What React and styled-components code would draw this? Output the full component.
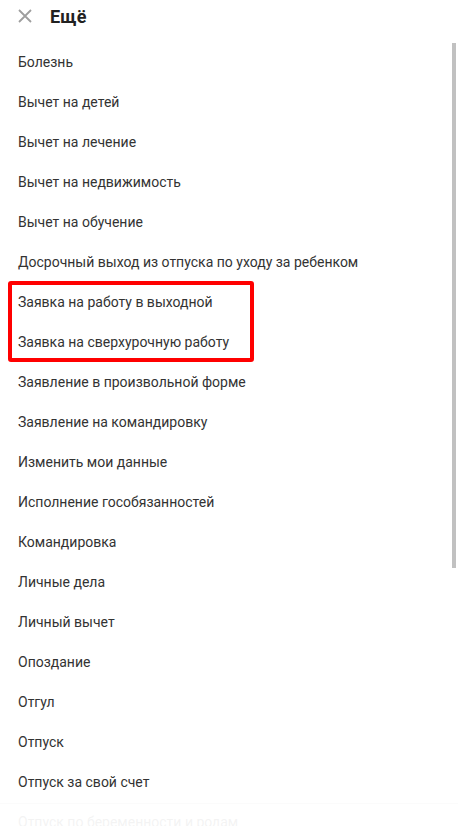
import React from "react";
import styled, { createGlobalStyle } from "styled-components";

const GlobalStyle = createGlobalStyle`
  html, body {
    margin: 0;
    padding: 0;
    background: #fff;
    font-family: Roboto, "Noto Sans", Arial, sans-serif;
  }
  * {
    box-sizing: border-box;
  }
`;

const topItems = [
  "Болезнь",
  "Вычет на детей",
  "Вычет на лечение",
  "Вычет на недвижимость",
  "Вычет на обучение",
  "Досрочный выход из отпуска по уходу за ребенком",
];

const marked = ["Заявка на работу в выходной", "Заявка на сверхурочную работу"];

const restItems = [
  "Заявление в произвольной форме",
  "Заявление на командировку",
  "Изменить мои данные",
  "Исполнение гособязанностей",
  "Командировка",
  "Личные дела",
  "Личный вычет",
  "Опоздание",
  "Отгул",
  "Отпуск",
  "Отпуск за свой счет",
  "Отпуск по беременности и родам",
];

function CloseIcon() {
  return (
    <svg width="14" height="14" viewBox="0 0 14 14">
      <path d="M1 1L13 13M13 1L1 13" stroke="#9e9e9e" strokeWidth="1.8" fill="none" />
    </svg>
  );
}

export default function App() {
  return (
    <Panel>
      <GlobalStyle />
      <Header>
        <CloseButton>
          <CloseIcon />
        </CloseButton>
        <Title>Ещё</Title>
      </Header>
      <List>
        {topItems.map((item) => (
          <Row key={item}>{item}</Row>
        ))}
        <Marked>
          {marked.map((item) => (
            <Row key={item}>{item}</Row>
          ))}
        </Marked>
        {restItems.map((item) => (
          <Row key={item}>{item}</Row>
        ))}
      </List>
      <ScrollThumb />
      <Fade />
    </Panel>
  );
}

const Panel = styled.div`
  position: relative;
  display: flex;
  flex-direction: column;
  width: 458px;
  height: 840px;
  overflow: hidden;
  background: #fff;
`;

const Header = styled.div`
  display: flex;
  align-items: center;
  gap: 18px;
  height: 42px;
  padding: 0 0 10px 18px;
  flex-shrink: 0;
`;

const CloseButton = styled.div`
  display: flex;
  flex-shrink: 0;
  width: 14px;
  height: 14px;
  cursor: pointer;
`;

const Title = styled.div`
  font-size: 18px;
  font-weight: 700;
  color: #212121;
  letter-spacing: 0.2px;
`;

const List = styled.div`
  flex: 1;
  overflow: hidden;
`;

const Row = styled.div`
  height: 40px;
  line-height: 40px;
  padding-left: 18px;
  font-size: 14px;
  color: #333;
  white-space: nowrap;
  cursor: pointer;
`;

const Marked = styled.div`
  position: relative;

  &::after {
    content: "";
    position: absolute;
    left: 8px;
    top: -1px;
    width: 238px;
    bottom: 0;
    border: 4px solid #ff0000;
    border-radius: 3px;
    pointer-events: none;
  }
`;

const ScrollThumb = styled.div`
  position: absolute;
  top: 43px;
  right: 2px;
  width: 4px;
  height: 525px;
  background: #c1c1c1;
`;

const Fade = styled.div`
  position: absolute;
  left: 0;
  right: 0;
  bottom: 0;
  height: 37px;
  border-top: 1px solid rgba(0, 0, 0, 0.015);
  background: linear-gradient(
    rgba(255, 255, 255, 0.94) 0,
    rgba(255, 255, 255, 0.94) 22px,
    #fff 22px
  );
  pointer-events: none;
`;
